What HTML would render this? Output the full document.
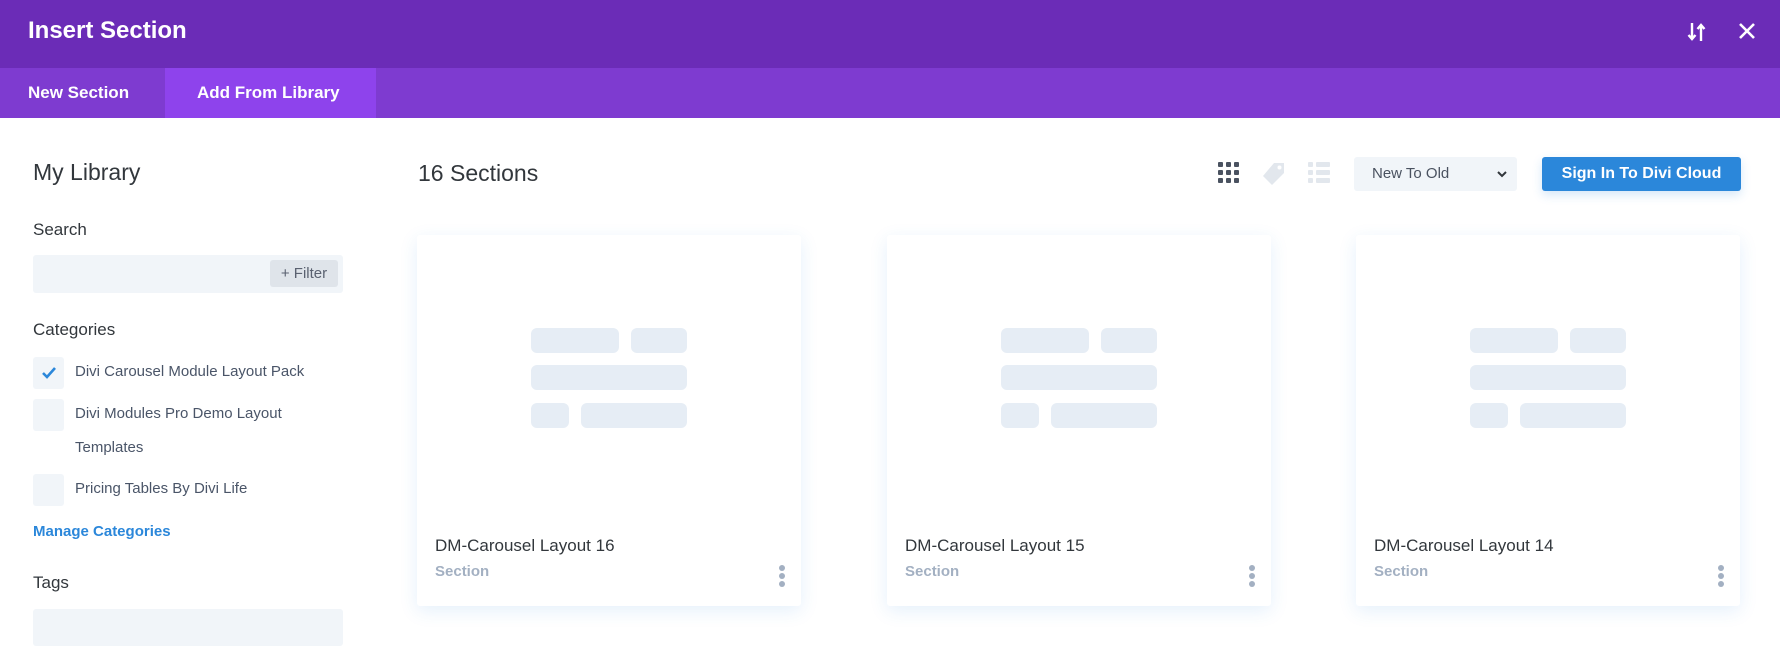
<!DOCTYPE html>
<html><head><meta charset="utf-8"><style>
*{margin:0;padding:0;box-sizing:border-box}
body{width:1780px;height:660px;overflow:hidden;background:#fff;font-family:"Liberation Sans",sans-serif;position:relative;color:#32373c}
.a{position:absolute}
.hdr{left:0;top:0;width:1780px;height:68px;background:#6b2cb7}
.tabs{left:0;top:68px;width:1780px;height:50px;background:#7e3bd0}
.act{left:165px;top:68px;width:211px;height:50px;background:#8e43ec}
.w{color:#fff;font-weight:bold}
.lbl{font-size:17px;color:#32373c}
.inp{background:#f1f5f9;border-radius:3px}
.cb{width:31px;height:32px;background:#f1f5f9;border-radius:3px}
.ct{font-size:15px;color:#4a5568;left:75px}
.card{width:384px;height:371px;top:235px;background:#fff;border-radius:3px;box-shadow:0 5px 18px rgba(43,135,218,0.12)}
.blk{position:absolute;background:#e6edf5;border-radius:6px;height:25px}
.ttl{position:absolute;left:18px;top:301px;font-size:17px;color:#32373c}
.sub{position:absolute;left:18px;top:328px;font-size:15px;color:#a3b0c2;font-weight:bold}
.dots{position:absolute;left:362px;top:330px;width:6px}
.dots i{display:block;width:6px;height:6px;border-radius:3px;background:#a3b0c2;margin-bottom:2px}
</style></head><body>
<div class="a hdr"></div>
<div class="a w" style="left:28px;top:17px;font-size:24px;font-weight:600">Insert Section</div>
<svg class="a" style="left:1685px;top:20px" width="24" height="24" viewBox="0 0 24 24"><path d="M7 3v16M3.5 15l3.5 4 3.5-4M16 21V5M12.5 9L16 5l3.5 4" stroke="#fff" stroke-width="2.4" fill="none"/></svg>
<svg class="a" style="left:1736px;top:20px" width="22" height="22" viewBox="0 0 22 22"><path d="M4 4l14 14M18 4L4 18" stroke="#fff" stroke-width="2.6"/></svg>
<div class="a tabs"></div><div class="a act"></div>
<div class="a w" style="left:28px;top:83px;font-size:17px">New Section</div>
<div class="a w" style="left:197px;top:83px;font-size:17px">Add From Library</div>

<div class="a" style="left:33px;top:159px;font-size:23px">My Library</div>
<div class="a lbl" style="left:33px;top:220px">Search</div>
<div class="a inp" style="left:33px;top:255px;width:310px;height:38px"></div>
<div class="a" style="left:270px;top:260px;width:68px;height:27px;background:#dfe4ea;border-radius:3px;font-size:15px;color:#5a6170;text-align:center;line-height:27px">+ Filter</div>
<div class="a lbl" style="left:33px;top:320px">Categories</div>
<div class="a cb" style="left:33px;top:357px"></div>
<svg class="a" style="left:40px;top:364px" width="18" height="18" viewBox="0 0 18 18"><path d="M3 9l4 4 8-9" stroke="#2b87da" stroke-width="2.6" fill="none"/></svg>
<div class="a ct" style="top:363px">Divi Carousel Module Layout Pack</div>
<div class="a cb" style="left:33px;top:399px"></div>
<div class="a ct" style="top:405px">Divi Modules Pro Demo Layout</div>
<div class="a ct" style="top:439px">Templates</div>
<div class="a cb" style="left:33px;top:474px"></div>
<div class="a ct" style="top:480px">Pricing Tables By Divi Life</div>
<div class="a" style="left:33px;top:523px;font-size:15px;color:#2b87da;font-weight:bold">Manage Categories</div>
<div class="a lbl" style="left:33px;top:573px">Tags</div>
<div class="a inp" style="left:33px;top:609px;width:310px;height:37px"></div>

<div class="a" style="left:418px;top:160px;font-size:23px">16 Sections</div>
<svg class="a" style="left:1218px;top:162px" width="21" height="21" viewBox="0 0 21 21" fill="#4a5260"><rect x="0" y="0" width="5" height="5" rx="1"/><rect x="8" y="0" width="5" height="5" rx="1"/><rect x="16" y="0" width="5" height="5" rx="1"/><rect x="0" y="8" width="5" height="5" rx="1"/><rect x="8" y="8" width="5" height="5" rx="1"/><rect x="16" y="8" width="5" height="5" rx="1"/><rect x="0" y="16" width="5" height="5" rx="1"/><rect x="8" y="16" width="5" height="5" rx="1"/><rect x="16" y="16" width="5" height="5" rx="1"/></svg>
<svg class="a" style="left:1262px;top:162px" width="24" height="24" viewBox="0 0 24 24"><path d="M12 1h10v10L10 23 1 14z" fill="#e2e7ed"/><circle cx="17.5" cy="5.5" r="2" fill="#fff"/></svg>
<svg class="a" style="left:1308px;top:162px" width="22" height="22" viewBox="0 0 22 22" fill="#e2e7ed"><rect x="0" y="0" width="5" height="5" rx="1"/><rect x="8" y="0" width="14" height="5" rx="1"/><rect x="0" y="8" width="5" height="5" rx="1"/><rect x="8" y="8" width="14" height="5" rx="1"/><rect x="0" y="16" width="5" height="5" rx="1"/><rect x="8" y="16" width="14" height="5" rx="1"/></svg>
<div class="a" style="left:1354px;top:157px;width:163px;height:34px;background:#f1f5f9;border-radius:3px"></div>
<div class="a" style="left:1372px;top:165px;font-size:15px;color:#4a5260">New To Old</div>
<svg class="a" style="left:1496px;top:168px" width="12" height="12" viewBox="0 0 12 12"><path d="M2 4l4 4 4-4" stroke="#32373c" stroke-width="2" fill="none"/></svg>
<div class="a" style="left:1542px;top:157px;width:199px;height:34px;background:#2b87da;border-radius:3px;box-shadow:0 4px 10px rgba(43,135,218,0.2);color:#fff;font-size:16px;font-weight:bold;text-align:center;line-height:34px">Sign In To Divi Cloud</div>

<div class="a card" style="left:417px">
<div class="blk" style="left:114px;top:93px;width:88px"></div><div class="blk" style="left:214px;top:93px;width:56px"></div>
<div class="blk" style="left:114px;top:130px;width:156px"></div>
<div class="blk" style="left:114px;top:168px;width:38px"></div><div class="blk" style="left:164px;top:168px;width:106px"></div>
<div class="ttl">DM-Carousel Layout 16</div><div class="sub">Section</div><div class="dots"><i></i><i></i><i></i></div></div>
<div class="a card" style="left:887px">
<div class="blk" style="left:114px;top:93px;width:88px"></div><div class="blk" style="left:214px;top:93px;width:56px"></div>
<div class="blk" style="left:114px;top:130px;width:156px"></div>
<div class="blk" style="left:114px;top:168px;width:38px"></div><div class="blk" style="left:164px;top:168px;width:106px"></div>
<div class="ttl">DM-Carousel Layout 15</div><div class="sub">Section</div><div class="dots"><i></i><i></i><i></i></div></div>
<div class="a card" style="left:1356px">
<div class="blk" style="left:114px;top:93px;width:88px"></div><div class="blk" style="left:214px;top:93px;width:56px"></div>
<div class="blk" style="left:114px;top:130px;width:156px"></div>
<div class="blk" style="left:114px;top:168px;width:38px"></div><div class="blk" style="left:164px;top:168px;width:106px"></div>
<div class="ttl">DM-Carousel Layout 14</div><div class="sub">Section</div><div class="dots"><i></i><i></i><i></i></div></div>
</body></html>
